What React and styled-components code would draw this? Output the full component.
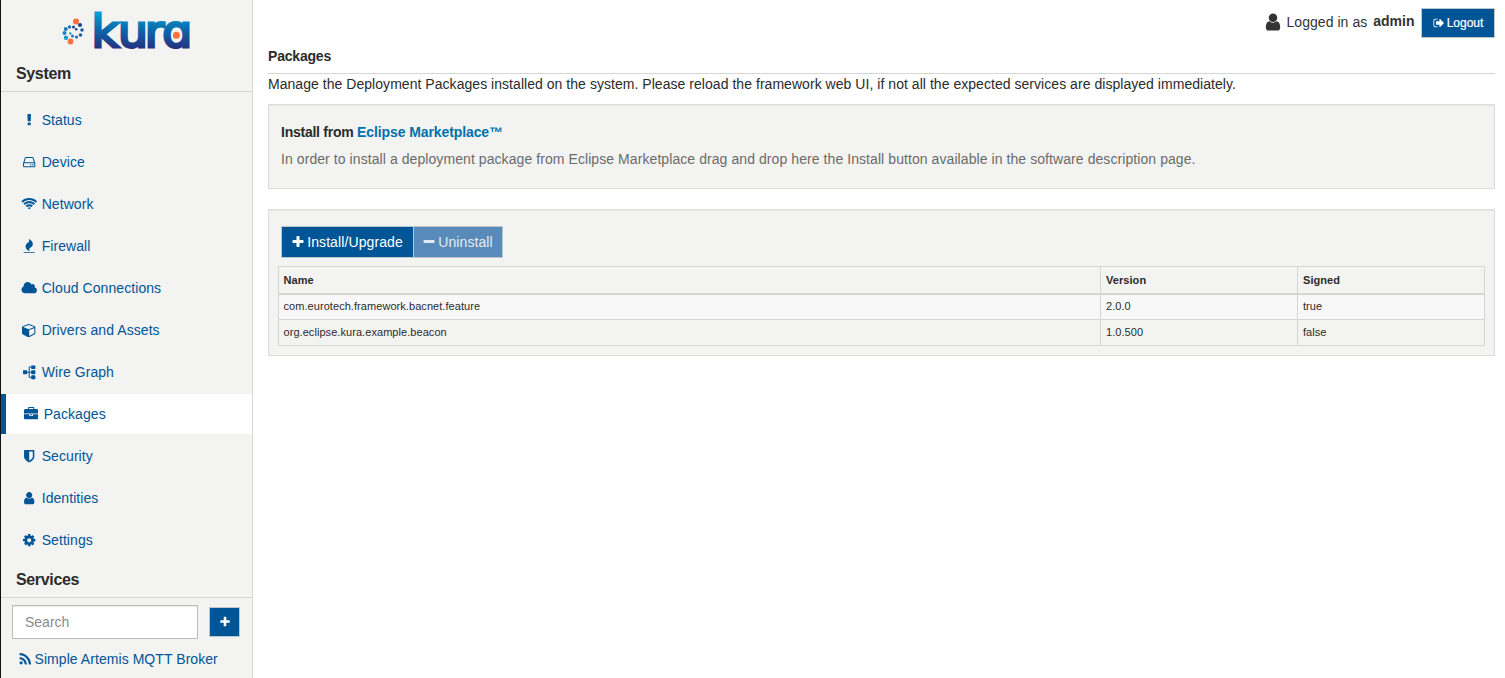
import React from "react";
import styled, { createGlobalStyle, css } from "styled-components";

const GlobalStyle = createGlobalStyle`
  * { box-sizing: border-box; }
  html, body { margin: 0; padding: 0; }
  body {
    background: #fff;
    color: #2b2b2b;
    font-family: "Liberation Sans", Arial, sans-serif;
    font-size: 14px;
    line-height: 20px;
    overflow: hidden;
  }
`;

const BLUE = "#005596";
const GREY = "#f3f3f2";
const LINE = "#d6d6d6";

/* Icon outlines on a 1792-unit grid */
const ICONS = {
  status: { d: "M1088 1248v224q0 26-19 45t-45 19h-256q-26 0-45-19t-19-45v-224q0-26 19-45t45-19h256q26 0 45 19t19 45zm30-1056l-28 768q-1 26-20.5 45t-45.5 19h-256q-26 0-45.5-19t-20.5-45l-28-768q-1-26 17.5-45t44.5-19h320q26 0 44.5 19t17.5 45z" },
  device: { d: "M1168 1216q0 33-23.5 56.5t-56.5 23.5-56.5-23.5-23.5-56.5 23.5-56.5 56.5-23.5 56.5 23.5 23.5 56.5zm256 0q0 33-23.5 56.5t-56.5 23.5-56.5-23.5-23.5-56.5 23.5-56.5 56.5-23.5 56.5 23.5 23.5 56.5zm112 160v-320q0-13-9.5-22.5t-22.5-9.5h-1216q-13 0-22.5 9.5t-9.5 22.5v320q0 13 9.5 22.5t22.5 9.5h1216q13 0 22.5-9.5t9.5-22.5zm-1230-480h1180l-157-482q-4-13-16-21.5t-26-8.5h-782q-14 0-26 8.5t-16 21.5zm1358 160v320q0 66-47 113t-113 47h-1216q-66 0-113-47t-47-113v-320q0-25 16-75l197-606q17-53 63-86t101-33h782q55 0 101 33t63 86l197 606q16 50 16 75z" },
  network: { w: 2048, d: "M1024 1523q-20 0-93-73.5t-73-93.5q0-32 62.5-54t103.5-22 103.5 22 62.5 54q0 20-73 93.5t-93 73.5zm270-271q-2 0-40-25t-101.5-50-128.5-25-128.5 25-101 50-40.5 25q-18 0-93.5-75t-75.5-93q0-13 10-23 78-77 196-121t233-44 233 44 196 121q10 10 10 23 0 18-75.5 93t-93.5 75zm273-272q-11 0-23-8-136-105-252-154.5t-268-49.5q-85 0-170.5 22t-149 53-113.5 62-79 53-31 22q-17 0-92-75t-75-93q0-12 10-22 132-132 320-205t380-73 380 73 320 205q10 10 10 22 0 18-75 93t-92 75zm271-271q-11 0-22-9-179-157-371.5-236.5t-420.5-79.5-420.5 79.5-371.5 236.5q-11 9-22 9-17 0-92.5-75t-75.5-93q0-13 10-23 187-186 445-288t527-102 527 102 445 288q10 10 10 23 0 18-75.5 93t-92.5 75z" },
  firewall: { d: "M1600 1696v64q0 13-9.5 22.5t-22.5 9.5h-1344q-13 0-22.5-9.5t-9.5-22.5v-64q0-13 9.5-22.5t22.5-9.5h1344q13 0 22.5 9.5t9.5 22.5zm-256-1056q0 78-24.5 144t-64 112.5-87.5 88-96 77.5-87.5 72-64 81.5-24.5 96.5q0 96 67 224l-4-1 1 1q-90-41-160-83t-138.5-100-113.5-122.5-72.5-150.5-27.5-184q0-78 24.5-144t64-112.5 87.5-88 96-77.5 87.5-72 64-81.5 24.5-96.5q0-94-66-224l3 1-1-1q90 41 160 83t138.5 100 113.5 122.5 72.5 150.5 27.5 184z" },
  cloud: { w: 2048, d: "M1984 1152q0 159-112.5 271.5t-271.5 112.5h-1088q-185 0-316.5-131.5t-131.5-316.5q0-132 71-241.5t187-163.5q-2-28-2-43 0-212 150-362t362-150q158 0 286.5 88t187.5 230q70-62 166-62 106 0 181 75t75 181q0 75-41 138 129 30 213 134.5t84 239.5z" },
  drivers: { d: "M896 1629l640-349v-636l-640 233v752zm-64-865l698-254-698-254-698 254zm832-252v768q0 35-18 65t-49 47l-704 384q-28 16-61 16t-61-16l-704-384q-31-17-49-47t-18-65v-768q0-40 23-73t61-47l704-256q22-8 44-8t44 8l704 256q38 14 61 47t23 73z" },
  graph: { turn: true, d: "M1792 1248v320q0 40-28 68t-68 28h-320q-40 0-68-28t-28-68v-320q0-40 28-68t68-28h96v-192h-512v192h96q40 0 68 28t28 68v320q0 40-28 68t-68 28h-320q-40 0-68-28t-28-68v-320q0-40 28-68t68-28h96v-192h-512v192h96q40 0 68 28t28 68v320q0 40-28 68t-68 28h-320q-40 0-68-28t-28-68v-320q0-40 28-68t68-28h96v-192q0-52 38-90t90-38h512v-192h-96q-40 0-68-28t-28-68v-320q0-40 28-68t68-28h320q40 0 68 28t28 68v320q0 40-28 68t-68 28h-96v192h512q52 0 90 38t38 90v192h96q40 0 68 28t28 68z" },
  packages: { d: "M640 256h512v-128h-512v128zm1152 640v480q0 66-47 113t-113 47h-1472q-66 0-113-47t-47-113v-480h672v160q0 26 19 45t45 19h320q26 0 45-19t19-45v-160h672zm-768 0v128h-256v-128h256zm768-480v384h-1792v-384q0-66 47-113t113-47h352v-160q0-40 28-68t68-28h576q40 0 68 28t28 68v160h352q66 0 113 47t47 113z" },
  security: { d: "M1344 960v-640h-448v1137q119-63 213-137 235-184 235-360zm192-768v768q0 86-33.5 170.5t-83 150-118 127.5-126.5 103-121 77.5-89.5 49.5-42.5 20q-12 6-26 6t-26-6q-16-7-42.5-20t-89.5-49.5-121-77.5-126.5-103-118-127.5-83-150-33.5-170.5v-768q0-26 19-45t45-19h1152q26 0 45 19t19 45z" },
  user: { d: "M1536 1399q0 109-62.5 187t-150.5 78h-854q-88 0-150.5-78t-62.5-187q0-85 8.5-160.5t31.5-152 58.5-131 94-89 134.5-34.5q131 128 313 128t313-128q76 0 134.5 34.5t94 89 58.5 131 31.5 152 8.5 160.5zm-256-887q0 159-112.5 271.5t-271.5 112.5-271.5-112.5-112.5-271.5 112.5-271.5 271.5-112.5 271.5 112.5 112.5 271.5z" },
  settings: { d: "M1152 896q0-106-75-181t-181-75-181 75-75 181 75 181 181 75 181-75 75-181zm512-109v222q0 12-8 23t-20 13l-185 28q-19 54-39 91 35 50 107 138 10 12 10 25t-9 23q-27 37-99 108t-94 71q-12 0-26-9l-138-108q-44 23-91 38-16 136-29 186-7 28-36 28h-222q-14 0-24.5-8.5t-11.5-21.5l-28-184q-49-16-90-37l-141 107q-10 9-25 9-14 0-25-11-126-114-165-168-7-10-7-23 0-12 8-23 15-21 51-66.5t54-70.5q-27-50-41-99l-183-27q-13-2-21-12.5t-8-23.5v-222q0-12 8-23t19-13l186-28q14-46 39-92-40-57-107-138-10-12-10-24 0-10 9-23 26-36 98.5-107.5t94.5-71.5q13 0 26 10l138 107q44-23 91-38 16-136 29-186 7-28 36-28h222q14 0 24.5 8.5t11.5 21.5l28 184q49 16 90 37l142-107q9-9 24-9 13 0 25 10 129 119 165 170 7 8 7 22 0 12-8 23-15 21-51 66.5t-54 70.5q26 50 41 98l183 28q13 2 21 12.5t8 23.5z" },
  plus: { d: "M1600 736v192q0 40-28 68t-68 28h-416v416q0 40-28 68t-68 28h-192q-40 0-68-28t-28-68v-416h-416q-40 0-68-28t-28-68v-192q0-40 28-68t68-28h416v-416q0-40 28-68t68-28h192q40 0 68 28t28 68v416h416q40 0 68 28t28 68z" },
  minus: { d: "M1600 736v192q0 40-28 68t-68 28h-1216q-40 0-68-28t-28-68v-192q0-40 28-68t68-28h1216q40 0 68 28t28 68z" },
  rss: { d: "M576 1344q0 80-56 136t-136 56-136-56-56-136 56-136 136-56 136 56 56 136zm512 123q2 28-17 48-18 21-47 21h-135q-25 0-43-16.5t-20-41.5q-22-229-184.5-391.5t-391.5-184.5q-25-2-41.5-20t-16.5-43v-135q0-29 21-47 17-17 43-17h5q160 13 306 80.5t259 181.5q114 113 181.5 259t80.5 306zm512 2q2 27-18 47-18 20-46 20h-143q-26 0-44.5-17.5t-19.5-42.5q-12-215-101-408.5t-231.5-336-336-231.5-408.5-102q-25-1-42.5-19.5t-17.5-43.5v-143q0-28 20-46 18-18 44-18h3q262 13 501.5 120t425.5 294q187 186 294 425.5t120 501.5z" },
  logout: { d: "M704 1440q0 4 1 20t.5 26.5-3 23.5-10 19.5-20.5 6.5h-320q-119 0-203.5-84.5t-84.5-203.5v-704q0-119 84.5-203.5t203.5-84.5h320q13 0 22.5 9.5t9.5 22.5q0 4 1 20t.5 26.5-3 23.5-10 19.5-20.5 6.5h-320q-66 0-113 47t-47 113v704q0 66 47 113t113 47h312l11.5 1 11.5 3 8 5.5 7 9 2 13.5zm928-544q0 26-19 45l-544 544q-19 19-45 19t-45-19-19-45v-288h-448q-26 0-45-19t-19-45v-384q0-26 19-45t45-19h448v-288q0-26 19-45t45-19 45 19l544 544q19 19 19 45z" },
};

const Glyph = styled.svg`
  display: block;
  flex: none;
  fill: currentColor;
  ${(p) => p.$turn && css`transform: rotate(270deg);`}
`;

function Icon({ name, size = 14 }) {
  const { d, w = 1792, turn } = ICONS[name];
  return (
    <Glyph $turn={turn} width={(size * w) / 1792} height={size} viewBox={`0 0 ${w} 1792`} aria-hidden="true">
      <path d={d} />
    </Glyph>
  );
}

const Page = styled.div`
  display: flex;
  width: 100%;
  height: 678px;
`;

const Sidebar = styled.aside`
  width: 253px;
  flex: none;
  display: flex;
  flex-direction: column;
  background: ${GREY};
  border-left: 1px solid #111;
  border-right: 1px solid ${LINE};
`;

const Brand = styled.div`
  height: 56px;
  padding-left: 49px;
  svg { display: block; }
`;

const SectionTitle = styled.h2`
  margin: 0;
  height: 36px;
  padding: 8px 0 0 15px;
  border-bottom: 1px solid ${LINE};
  font-size: 16px;
  line-height: 20px;
  font-weight: 700;
  letter-spacing: -0.35px;
`;

const Nav = styled.nav`
  display: flex;
  flex-direction: column;
  gap: 2px;
  padding: 8px 0 2px;
`;

const NavItem = styled.a`
  display: flex;
  align-items: center;
  height: 40px;
  padding-left: ${(p) => (p.$active ? "15px" : "18px")};
  border-left: ${(p) => (p.$active ? `5px solid ${BLUE}` : "0")};
  background: ${(p) => (p.$active ? "#fff" : "transparent")};
  color: ${BLUE};
  letter-spacing: 0.07px;
`;

const IconSlot = styled.span`
  display: flex;
  justify-content: center;
  width: 20px;
  margin-right: 2.7px;
`;

const Search = styled.div`
  display: flex;
  align-items: center;
  gap: 11px;
  height: 34px;
  margin: 7px 0 0 11px;
`;

const SearchInput = styled.input`
  width: 186px;
  height: 34px;
  padding: 6px 12px;
  border: 1px solid #bbb;
  border-radius: 0;
  box-shadow: inset 0 1px 1px rgba(0, 0, 0, 0.075);
  font: inherit;
  &::placeholder { color: #8b8b8b; opacity: 1; }
`;

const Button = styled.button`
  display: flex;
  align-items: center;
  justify-content: center;
  gap: 2px;
  width: ${(p) => p.$width};
  height: ${(p) => (p.$large ? "32px" : "30px")};
  padding: ${(p) => (p.$large ? "0 1px 0 0" : "0")};
  border: 1px solid #bfc6cc;
  border-radius: 0;
  background: ${BLUE};
  color: #fff;
  font-family: inherit;
  font-size: ${(p) => (p.$large ? "14px" : "12px")};
  letter-spacing: ${(p) => (p.$large ? "0.1px" : "0")};
  -webkit-text-stroke: ${(p) => (p.$large ? "0" : "0.2px #fff")};
  &:disabled {
    margin-left: -1px;
    background: #588bb9;
    color: #e3ebf2;
  }
`;

const Service = styled.a`
  display: flex;
  align-items: center;
  gap: 2px;
  padding: 10px 0 0 17px;
  color: ${BLUE};
  letter-spacing: 0.06px;
`;

const Main = styled.main`
  flex: 1;
  min-width: 0;
  padding: 8px 10px 0 15px;
`;

const TopBar = styled.header`
  display: flex;
  justify-content: flex-end;
  height: 38px;
  color: #333;
`;

const LoggedIn = styled.div`
  display: flex;
  align-items: center;
  height: 28px;
  margin-right: 6.5px;
  letter-spacing: 0.05px;
  b {
    margin-left: 6px;
    padding-bottom: 2px;
    letter-spacing: 0;
  }
`;

const UserSlot = styled.span`
  margin-right: 3px;
  padding-bottom: 1px;
`;

const PageTitle = styled.h1`
  margin: 0;
  height: 28px;
  border-bottom: 1px solid ${LINE};
  font-size: 14px;
  line-height: 20px;
  letter-spacing: -0.2px;
`;

const Intro = styled.p`
  margin: 0 0 10px;
  white-space: nowrap;
  letter-spacing: 0.042px;
`;

const Well = styled.section`
  height: ${(p) => p.$height};
  padding: ${(p) => p.$pad};
  margin-bottom: 20px;
  background: ${GREY};
  border: 1px solid #dcdcdc;
  box-shadow: inset 0 1px 1px rgba(0, 0, 0, 0.05);
`;

const WellTitle = styled.h3`
  margin: 0 0 7px;
  font-size: 14px;
  line-height: 20px;
  letter-spacing: -0.25px;
  a { color: #0071ab; letter-spacing: -0.1px; }
`;

const Hint = styled.p`
  margin: 0;
  color: #6b6b6b;
  white-space: nowrap;
  letter-spacing: 0.075px;
`;

const Toolbar = styled.div`
  display: flex;
  margin: 0 0 8px 3px;
`;

const Table = styled.table`
  width: 1206px;
  table-layout: fixed;
  border-collapse: collapse;
  font-size: 11px;
  line-height: 16px;
  letter-spacing: 0.06px;
  th, td {
    height: 26px;
    padding: 0 5px 1px 5px;
    border: 1px solid ${LINE};
    text-align: left;
  }
  th:first-child, td:first-child { padding-left: 4.5px; }
  th {
    height: 27px;
    padding-bottom: 0;
    border-bottom-width: 2px;
  }
  tbody tr:nth-child(odd) { background: #f8f8f8; }
`;

const DOTS = [
  [76, 21.5, 3, "#ff6f3c"], [80, 25, 2.1, "#15468f"], [82, 30, 1.8, "#1c5fa5"],
  [80.5, 35, 1.8, "#1c5fa5"], [76.5, 37, 1.6, "#1676b5"], [72.5, 36, 1.5, "#1676b5"],
  [70.3, 33.5, 1.3, "#2a9fd0"], [76.2, 29.3, 1.3, "#15468f"], [73.5, 27, 1.5, "#15468f"],
  [69.5, 27, 1.7, "#1676b5"], [65.8, 29, 1.9, "#1676b5"], [64.5, 33, 2, "#1b83c0"],
  [66, 37.8, 2.2, "#119bcf"], [70.5, 41.5, 2.9, "#ff6f3c"],
];

function Logo() {
  return (
    <svg width="150" height="64" viewBox="50 0 150 64" role="img" aria-label="kura">
      <defs>
        <linearGradient id="word" gradientUnits="userSpaceOnUse" x1="0" y1="11" x2="0" y2="49">
          <stop offset="0" stopColor="#00a5dc" />
          <stop offset="0.5" stopColor="#0b68a8" />
          <stop offset="1" stopColor="#25307f" />
        </linearGradient>
      </defs>
      {DOTS.map(([x, y, r, c], i) => <circle key={i} cx={x} cy={y} r={r} fill={c} />)}
      <text
        transform="scale(1.05 1)" x="87.2 112.4 137.9 154.6" y="47.5"
        fontFamily="DejaVu Sans" fontSize="45"
        fill="url(#word)" stroke="url(#word)" strokeWidth="2.8"
      >kurɑ</text>
      <circle cx="176.4" cy="35.2" r="3.5" fill="#ff6f3c" />
    </svg>
  );
}

const NAV = [
  ["status", "Status"], ["device", "Device"], ["network", "Network"], ["firewall", "Firewall"],
  ["cloud", "Cloud Connections"], ["drivers", "Drivers and Assets"], ["graph", "Wire Graph"],
  ["packages", "Packages"], ["security", "Security"], ["user", "Identities"], ["settings", "Settings"],
];

const PACKAGES = [
  ["com.eurotech.framework.bacnet.feature", "2.0.0", "true"],
  ["org.eclipse.kura.example.beacon", "1.0.500", "false"],
];

export default function App() {
  return (
    <>
      <GlobalStyle />
      <Page>
        <Sidebar>
          <Brand><Logo /></Brand>
          <SectionTitle>System</SectionTitle>
          <Nav>
            {NAV.map(([icon, label]) => (
              <NavItem key={label} $active={label === "Packages"}>
                <IconSlot><Icon name={icon} size={14.4} /></IconSlot>
                {label}
              </NavItem>
            ))}
          </Nav>
          <SectionTitle>Services</SectionTitle>
          <Search>
            <SearchInput placeholder="Search" />
            <Button $width="31px" aria-label="Add"><Icon name="plus" size={12} /></Button>
          </Search>
          <Service><Icon name="rss" size={14.5} />Simple Artemis MQTT Broker</Service>
        </Sidebar>
        <Main>
          <TopBar>
            <LoggedIn>
              <UserSlot><Icon name="user" size={20} /></UserSlot>
              Logged in as <b>admin</b>
            </LoggedIn>
            <Button $width="74px"><Icon name="logout" size={12} />Logout</Button>
          </TopBar>
          <PageTitle>Packages</PageTitle>
          <Intro>
            Manage the Deployment Packages installed on the system. Please reload the framework web UI, if not all the expected services are displayed immediately.
          </Intro>
          <Well $height="85px" $pad="17px 12px">
            <WellTitle>Install from <a>Eclipse Marketplace™</a></WellTitle>
            <Hint>
              In order to install a deployment package from Eclipse Marketplace drag and drop here the Install button available in the software description page.
            </Hint>
          </Well>
          <Well $height="147px" $pad="16px 9px">
            <Toolbar>
              <Button $width="133px" $large><Icon name="plus" />Install/Upgrade</Button>
              <Button $width="90px" $large disabled><Icon name="minus" />Uninstall</Button>
            </Toolbar>
            <Table>
              <colgroup><col width="822" /><col width="197" /><col width="187" /></colgroup>
              <thead><tr><th>Name</th><th>Version</th><th>Signed</th></tr></thead>
              <tbody>
                {PACKAGES.map((row) => (
                  <tr key={row[0]}>{row.map((cell) => <td key={cell}>{cell}</td>)}</tr>
                ))}
              </tbody>
            </Table>
          </Well>
        </Main>
      </Page>
    </>
  );
}
